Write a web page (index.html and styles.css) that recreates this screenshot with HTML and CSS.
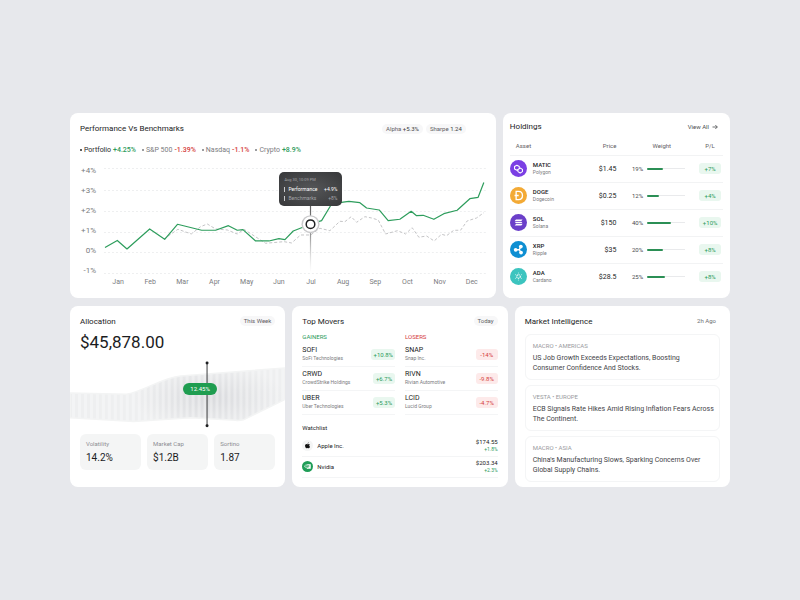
FILE: index.html
```html
<!DOCTYPE html>
<html lang="en">
<head>
<meta charset="utf-8">
<meta name="viewport" content="width=device-width, initial-scale=1">
<title>Portfolio dashboard</title>
<link rel="stylesheet" href="styles.css">
</head>
<body>
<main class="dashboard">
  <div class="row row-top">
  <section class="card performance">
    <header class="card-head">
      <h2>Performance Vs Benchmarks</h2>
      <div class="chips"><span class="chip">Alpha <b>+5.3%</b></span><span class="chip">Sharpe <b>1.24</b></span></div>
    </header>
    <ul class="legend">
      <li class="main">Portfolio <b class="up">+4.25%</b></li>
      <li>S&amp;P 500 <b class="down">-1.39%</b></li>
      <li>Nasdaq <b class="down">-1.1%</b></li>
      <li>Crypto <b class="up">+8.9%</b></li>
    </ul>
    <div class="chart">
      <div class="y-axis"><span>+4%</span><span>+3%</span><span>+2%</span><span>+1%</span><span>0%</span><span>-1%</span></div>
      <div class="plot">
        <svg viewBox="102 166 386 110" role="img" aria-label="Portfolio and benchmark performance by month">
          <defs>
            <linearGradient id="cursor" x1="0" y1="200" x2="0" y2="272" gradientUnits="userSpaceOnUse">
              <stop offset="0" stop-color="#555"/><stop offset="0.5" stop-color="#999"/><stop offset="1" stop-color="#ccc" stop-opacity="0"/>
            </linearGradient>
          </defs>
          <path d="M104 168.5H486M104 190.5H486M104 211.5H486M104 232.5H486M104 252.5H486M104 273.5H486" stroke="#eeeff0" stroke-dasharray="2 2" fill="none"/>
          <polyline fill="none" stroke="#c4c4c6" stroke-width="1" stroke-dasharray="3 2" stroke-linejoin="round" points="164,239 178,229.3 191.3,234 200.7,226.7 207.3,224 215.7,229 227.3,230 237.3,234 244,229.3 265.7,243.3 284,241.7 291.7,243 300.7,235 310.7,235 320,228.3 330,230.7 340,221.3 345,221.7 351.3,216.7 356.7,222.3 365,216.7 371.7,218 378.3,220 385.7,234 397.7,230.7 405.7,234 412.3,227.7 419,237.3 426.7,236 434.3,241 441.7,234.3 446.7,235.7 454,230.3 460.7,230.3 467.3,221 476.7,218 484,212.7"/>
          <polyline fill="none" stroke="#2d9d5c" stroke-width="1.2" stroke-linejoin="round" points="105,247.5 117.3,240.5 127,249 149.7,229 164.7,239.3 177.5,224.3 201.7,230.3 215.7,230.3 228.5,225.7 237.3,230.3 243,229.7 255.7,241 269,241 279,238.7 285,239.7 293.3,231 310.7,224.3 321.7,220.7 331.7,204 343.3,202.2 349,201.3 360,202.7 366.7,208 379.3,210 388.3,220.7 400,219.3 411.3,211.3 416.7,215.7 423.3,215.3 434,219.3 444,213.7 457.3,210.3 470,198.7 478.3,197.3 484,182.5"/>
          <rect x="310" y="200" width="1.2" height="72" fill="url(#cursor)"/>
          <circle cx="310.6" cy="224.2" r="9" fill="#c9c9cb"/>
          <circle cx="310.6" cy="224.2" r="7.6" fill="#fff"/>
          <circle cx="310.6" cy="224.2" r="4.3" fill="#fff" stroke="#1f2022" stroke-width="1.5"/>
        </svg>
        <div class="tooltip" role="tooltip">
          <time>Aug 30, 10:09 PM</time>
          <p class="strong"><span>Performance</span><b>+4.9%</b></p>
          <p><span>Benchmarks</span><b>+8%</b></p>
        </div>
      </div>
      <div class="x-axis"><span>Jan</span><span>Feb</span><span>Mar</span><span>Apr</span><span>May</span><span>Jun</span><span>Jul</span><span>Aug</span><span>Sep</span><span>Oct</span><span>Nov</span><span>Dec</span></div>
    </div>
  </section>

  <section class="card holdings">
    <header class="card-head">
      <h2>Holdings</h2>
      <a class="view-all" href="#holdings">View All
        <svg viewBox="0 0 6 6" width="6" height="6" aria-hidden="true"><path d="M.5 3h4.8M3.3 1l2 2-2 2" fill="none" stroke="currentColor" stroke-width=".8"/></svg>
      </a>
    </header>
    <table id="holdings">
      <colgroup><col class="c-asset"><col class="c-price"><col class="c-weight"><col class="c-pl"></colgroup>
      <thead><tr><th class="th-asset">Asset</th><th class="th-price">Price</th><th class="th-weight">Weight</th><th class="th-pl">P/L</th></tr></thead>
      <tbody>
        <tr>
          <td><div class="asset">
            <svg class="coin" viewBox="0 0 18 18" aria-hidden="true"><circle cx="9" cy="9" r="9" fill="#7b3fe4"/><g fill="none" stroke="#fff" stroke-width="1.1" stroke-linejoin="round"><path d="M9.800 8.300V6.900L7.300 5.500 4.800 6.900v2.600l2.500 1.400 3.500-2.400 2.400 1.400v2.400l-2.400 1.400-2.400-1.400V9.900"/></g></svg>
            <div><strong>MATIC</strong><small>Polygon</small></div></div></td>
          <td class="price">$1.45</td>
          <td><div class="weight"><span>19%</span><i><em style="width:41%"></em></i></div></td>
          <td><span class="pill up">+7%</span></td>
        </tr>
        <tr>
          <td><div class="asset">
            <svg class="coin" viewBox="0 0 18 18" aria-hidden="true"><circle cx="9" cy="9" r="9" fill="#f3aa35"/><path d="M6.500 4.600h2.600c2.500 0 4.100 1.800 4.100 4.400s-1.600 4.400-4.100 4.400H6.500zM4.800 9h4.400" fill="none" stroke="#fff" stroke-width="1.400"/></svg>
            <div><strong>DOGE</strong><small>Dogecoin</small></div></div></td>
          <td class="price">$0.25</td>
          <td><div class="weight"><span>12%</span><i><em style="width:30%"></em></i></div></td>
          <td><span class="pill up">+4%</span></td>
        </tr>
        <tr>
          <td><div class="asset">
            <svg class="coin" viewBox="0 0 18 18" aria-hidden="true"><circle cx="9" cy="9" r="9" fill="#6b3fc9"/><path d="M6.300 5.700h7l-1.300 1.800H5zM5 8.100h7l1.300 1.800h-7zM6.300 10.500h7L12 12.300H5z" fill="#fff"/></svg>
            <div><strong>SOL</strong><small>Solana</small></div></div></td>
          <td class="price">$150</td>
          <td><div class="weight"><span>40%</span><i><em style="width:62%"></em></i></div></td>
          <td><span class="pill up">+10%</span></td>
        </tr>
        <tr>
          <td><div class="asset">
            <svg class="coin" viewBox="0 0 18 18" aria-hidden="true"><circle cx="9" cy="9" r="9" fill="#0f8fd2"/><path d="M6 9.300h3.800M11.500 6 9.800 9.300l1.900 2.800" stroke="#fff" stroke-width="1.500" fill="none"/><g fill="#fff"><circle cx="6" cy="9.300" r="2"/><circle cx="11.500" cy="5.900" r="2"/><circle cx="11.700" cy="12.300" r="2"/></g></svg>
            <div><strong>XRP</strong><small>Ripple</small></div></div></td>
          <td class="price">$35</td>
          <td><div class="weight"><span>20%</span><i><em style="width:41%"></em></i></div></td>
          <td><span class="pill up">+8%</span></td>
        </tr>
        <tr>
          <td><div class="asset">
            <svg class="coin" viewBox="0 0 18 18" aria-hidden="true"><circle cx="9" cy="9" r="9" fill="#3cc4bf"/><circle cx="9" cy="9" r="1.900" fill="none" stroke="#fff" stroke-width="1.100" stroke-dasharray="1.400 .6"/><g fill="#fff"><circle cx="9" cy="5.300" r=".5"/><circle cx="9" cy="12.700" r=".5"/><circle cx="5.800" cy="7.100" r=".5"/><circle cx="12.200" cy="7.100" r=".5"/><circle cx="5.800" cy="10.900" r=".5"/><circle cx="12.200" cy="10.900" r=".5"/></g></svg>
            <div><strong>ADA</strong><small>Cardano</small></div></div></td>
          <td class="price">$28.5</td>
          <td><div class="weight"><span>25%</span><i><em style="width:46%"></em></i></div></td>
          <td><span class="pill up">+8%</span></td>
        </tr>
      </tbody>
    </table>
  </section>
  </div>

  <div class="row row-bottom">
  <section class="card allocation">
    <header class="card-head"><h2>Allocation</h2><span class="chip">This Week</span></header>
    <p class="total">$45,878.00</p>
    <div class="area">
      <svg viewBox="70 360 216 68" role="img" aria-label="Allocation range over the week">
        <defs>
          <pattern id="stripes" width="6" height="500" patternUnits="userSpaceOnUse"><rect width="3" height="500" fill="#fff" fill-opacity=".32"/></pattern>
          <radialGradient id="shade" cx="0" cy="0" r="1" gradientUnits="userSpaceOnUse" gradientTransform="translate(210 398) scale(75 34)"><stop offset="0" stop-color="#d9dadd"/><stop offset="1" stop-color="#eeeff0"/></radialGradient>
        </defs>
        <path d="M70 393 127 394.300C145 391 163 377.500 181 376L286 368V399.500L244 420Q240 421 236 420.500L191 418 134 421.700 70 418Z" fill="url(#shade)"/>
        <path d="M70 393 127 394.300C145 391 163 377.500 181 376L286 368V399.500L244 420Q240 421 236 420.500L191 418 134 421.700 70 418Z" fill="url(#stripes)" stroke="#f3f4f4" stroke-width="1.500"/>
        <path d="M207.500 363V426" stroke="#3a3b3d" stroke-width="1"/>
        <circle cx="207.500" cy="363" r="1.500" fill="#1d1e20"/><circle cx="207.500" cy="426" r="1.500" fill="#1d1e20"/>
      </svg>
      <span class="marker">12.45%</span>
    </div>
    <dl class="stats">
      <div><dt>Volatility</dt><dd>14.2%</dd></div>
      <div><dt>Market Cap</dt><dd>$1.2B</dd></div>
      <div><dt>Sortino</dt><dd>1.87</dd></div>
    </dl>
  </section>

  <section class="card movers">
    <header class="card-head"><h2>Top Movers</h2><span class="chip">Today</span></header>
    <div class="columns">
      <div>
        <h3 class="up">GAINERS</h3>
        <ul>
          <li><div><strong>SOFI</strong><small>SoFi Technologies</small></div><span class="pill up">+10.8%</span></li>
          <li><div><strong>CRWD</strong><small>CrowdStrike Holdings</small></div><span class="pill up">+6.7%</span></li>
          <li><div><strong>UBER</strong><small>Uber Technologies</small></div><span class="pill up">+5.3%</span></li>
        </ul>
      </div>
      <div>
        <h3 class="down">LOSERS</h3>
        <ul>
          <li><div><strong>SNAP</strong><small>Snap Inc.</small></div><span class="pill down">-14%</span></li>
          <li><div><strong>RIVN</strong><small>Rivian Automotive</small></div><span class="pill down">-9.8%</span></li>
          <li><div><strong>LCID</strong><small>Lucid Group</small></div><span class="pill down">-4.7%</span></li>
        </ul>
      </div>
    </div>
    <h3 class="watch-title">Watchlist</h3>
    <ul class="watchlist">
      <li>
        <svg viewBox="0 0 22 22" aria-hidden="true"><circle cx="11" cy="11" r="11" fill="#f4f5f5"/><path d="M13.300 5c.1 1.300-1 2.400-2.200 2.400C11 6.200 12.100 5.100 13.300 5zM15.700 9.200c-1.800 1.200-1.500 3.500.4 4.300-.5 1.400-1.500 2.900-2.600 2.900-.8 0-1.200-.5-2.200-.5s-1.400.5-2.200.5c-1.400 0-3-2.800-3-5 0-2.100 1.400-3.500 3-3.500.9 0 1.500.6 2.300.6s1.400-.6 2.500-.6c.7 0 1.400.5 1.800 1.300z" fill="#111"/></svg>
        <span>Apple Inc.</span><div class="quote"><strong>$174.55</strong><small class="up">+1.8%</small></div>
      </li>
      <li>
        <svg viewBox="0 0 22 22" aria-hidden="true"><circle cx="11" cy="11" r="11" fill="#1f9d57"/><path d="M10 6.500h7.500v9H10z" fill="#fff"/><path d="M4.300 10.600Q7.300 7 11 7.200q3 .3 4.700 2.900Q13.500 14 10.500 14.200 7 14 4.300 10.600z" fill="#1f9d57" stroke="#fff" stroke-width="1.100"/><path d="M7 10.600q1.500-1.800 3.500-1.600t2.800 1.400q-1.200 2-3 2-1.900-.2-3.300-1.800z" fill="none" stroke="#fff" stroke-width=".9"/></svg>
        <span>Nvidia</span><div class="quote"><strong>$203.34</strong><small class="up">+2.3%</small></div>
      </li>
    </ul>
  </section>

  <section class="card news">
    <header class="card-head"><h2>Market Intelligence</h2><span class="ago">2h Ago</span></header>
    <article><h3>MACRO • AMERICAS</h3><p>US Job Growth Exceeds Expectations, Boosting<br>Consumer Confidence And Stocks.</p></article>
    <article><h3>VESTA • EUROPE</h3><p>ECB Signals Rate Hikes Amid Rising Inflation Fears Across<br>The Continent.</p></article>
    <article><h3>MACRO • ASIA</h3><p>China's Manufacturing Slows, Sparking Concerns Over<br>Global Supply Chains.</p></article>
  </section>
  </div>
</main>
</body>
</html>
```
FILE: styles.css
```css
* { box-sizing: border-box; }

body {
  margin: 0;
  min-height: 100vh;
  display: flex;
  align-items: center;
  background: #e7e8ec;
  color: #1b1c1e;
  font-family: Roboto, "Liberation Sans", sans-serif;
  font-size: 7px;
  line-height: 10px;
}

h2, h3, p, ul, dl, dd { margin: 0; padding: 0; }
ul { list-style: none; }
h2 { font-size: 8px; font-weight: 400; line-height: 13px; }
h3 { font-size: 6px; font-weight: 400; line-height: 8px; }
b, strong { font-weight: 400; }
small { font-size: 5px; line-height: 7px; color: #7b7c80; }
strong, small { display: block; }
svg { display: block; }

.up { color: #2b9a5b; }
.down { color: #d5403d; }

.dashboard { flex: 1; padding: 0 70px; }
.row { display: grid; gap: 7px; }
.row-top { grid-template-columns: 15fr 8fr; }
.row-bottom { grid-template-columns: repeat(3, 1fr); margin-top: 8px; }

.card {
  min-width: 0;
  background: #fff;
  border-radius: 8px;
  padding: 9px 10px 6px;
}

.card-head {
  display: flex;
  justify-content: space-between;
  align-items: center;
}

.chips { display: flex; gap: 3px; }
.chip {
  padding: 0 4px;
  border-radius: 5px;
  background: #f7f7f8;
  color: #5f6064;
  font-size: 6px;
}
.chip b { color: #3d3e41; }

/* Performance */
.performance { padding: 9px 8px 11px 10px; }
.performance .chips { margin-right: 22px; }
.legend {
  display: flex;
  gap: 6px;
  margin-top: 10px;
  color: #7b7c80;
}
.legend li { display: flex; align-items: center; gap: 2px; }
.legend li::before {
  content: "";
  width: 2px;
  height: 2px;
  border-radius: 50%;
  background: currentColor;
}
.legend b { font-weight: 500; }
.legend .main { color: #27282a; }

.chart {
  display: grid;
  grid-template-columns: 16px 1fr;
  gap: 1px 6px;
  margin-top: 11px;
  color: #7b7c80;
}
.y-axis {
  display: flex;
  flex-direction: column;
  justify-content: space-between;
  font-size: 8px;
  text-align: right;
}
.plot { position: relative; }
.x-axis {
  grid-column: 2;
  display: grid;
  grid-template-columns: repeat(12, 1fr);
  text-align: center;
}
.tooltip {
  position: absolute;
  left: 46%;
  top: 6px;
  width: 63px;
  padding: 4px 5px;
  border-radius: 5px;
  background: radial-gradient(#555658, #37383a);
  color: #a4a5a8;
  font-size: 5px;
  line-height: 7px;
}
.tooltip time { display: block; font-size: 4px; }
.tooltip p {
  display: flex;
  justify-content: space-between;
  align-items: center;
  margin-top: 2px;
}
.tooltip time + p { margin-top: 3px; }
.tooltip span { border-left: 1px solid #c9c9cb; padding-left: 3px; line-height: 5px; }
.tooltip .strong { color: #fff; }

/* Holdings */
.holdings { padding: 7px 7px 6px; }
.holdings .card-head { padding-right: 5px; }
.view-all {
  display: flex;
  align-items: center;
  gap: 3px;
  color: #4a4b4f;
  font-size: 6px;
  text-decoration: none;
}
table {
  width: 100%;
  margin-top: 5px;
  border-collapse: collapse;
  table-layout: fixed;
}
.c-asset { width: 35%; }
.c-price { width: 15%; }
.c-weight { width: 36%; }
.c-pl { width: 14%; }
th {
  height: 17px;
  padding: 0;
  color: #5f6064;
  font-size: 6px;
  font-weight: 400;
  text-align: center;
}
.th-asset { padding-left: 6px; text-align: left; }
.th-price { text-align: right; }
.th-weight { padding-left: 14px; }
.th-pl { padding-left: 4px; }
td { height: 27px; padding: 0; border-top: 1px solid #f2f3f4; }
.asset { display: flex; align-items: center; gap: 6px; }
.asset strong { font-size: 6px; font-weight: 500; line-height: 8px; }
.coin { width: 17px; height: 17px; }
.price { text-align: right; }
.weight {
  display: flex;
  align-items: center;
  justify-content: flex-end;
  gap: 4px;
  padding-right: 8px;
  color: #4a4b4f;
  font-size: 6px;
}
.weight i { width: 38px; height: 1px; background: #e9eaec; display: flex; align-items: center; }
.weight em { height: 2px; flex: none; border-radius: 1px; background: #2b8f55; }
.pill {
  display: block;
  min-width: 22px;
  padding: 0 2px;
  border-radius: 3px;
  font-size: 6px;
  line-height: 11px;
  text-align: center;
}
td .pill { margin: 0 2px 0 6px; }
.pill.up { background: #e9f7ef; }
.pill.down { background: #fdeaea; }

/* Allocation */
.total { margin-top: 3px; font-size: 17px; line-height: 22px; }
.area { position: relative; margin: 7px -10px 0; }
.marker {
  position: absolute;
  left: 52.5%;
  top: 23px;
  width: 34px;
  border-radius: 6px;
  background: #1f9d50;
  color: #fff;
  font-size: 6px;
  line-height: 12px;
  text-align: center;
}
.stats {
  display: grid;
  grid-template-columns: repeat(3, 1fr);
  gap: 6px;
  margin-top: 6px;
}
.stats div { padding: 5px 6px; border-radius: 6px; background: #f4f5f5; }
.stats dt { color: #8d8e92; font-size: 6px; line-height: 10px; }
.stats dd { margin-top: 2px; font-size: 10px; line-height: 14px; }

/* Top movers */
.columns {
  display: grid;
  grid-template-columns: 1fr 1fr;
  gap: 10px;
  margin-top: 5px;
}
.columns ul { margin-top: 2px; }
.columns li {
  display: flex;
  align-items: center;
  justify-content: space-between;
  height: 24px;
  border-bottom: 1px solid #f4f5f6;
}
.columns strong { line-height: 9px; }
.watch-title { margin-top: 9px; }
.watchlist { margin-top: 4px; }
.watchlist li {
  display: flex;
  align-items: center;
  gap: 4px;
  height: 21px;
  border-bottom: 1px solid #f4f5f6;
  font-size: 6px;
}
.watchlist svg { width: 11px; height: 11px; }
.quote { margin-left: auto; text-align: right; }
.quote strong { line-height: 8px; }
.quote .up { color: #2b9a5b; }

/* Market intelligence */
.news { padding-bottom: 5px; }
.ago { padding-right: 4px; color: #6c6d71; font-size: 6px; }
.news article {
  margin-top: 5px;
  padding: 7px 3px 6px 7px;
  border: 1px solid #f4f5f6;
  border-radius: 6px;
}
.news .card-head + article { margin-top: 6px; }
.news h3 { color: #999a9e; }
.news p { margin-top: 3px; color: #434448; }
```
